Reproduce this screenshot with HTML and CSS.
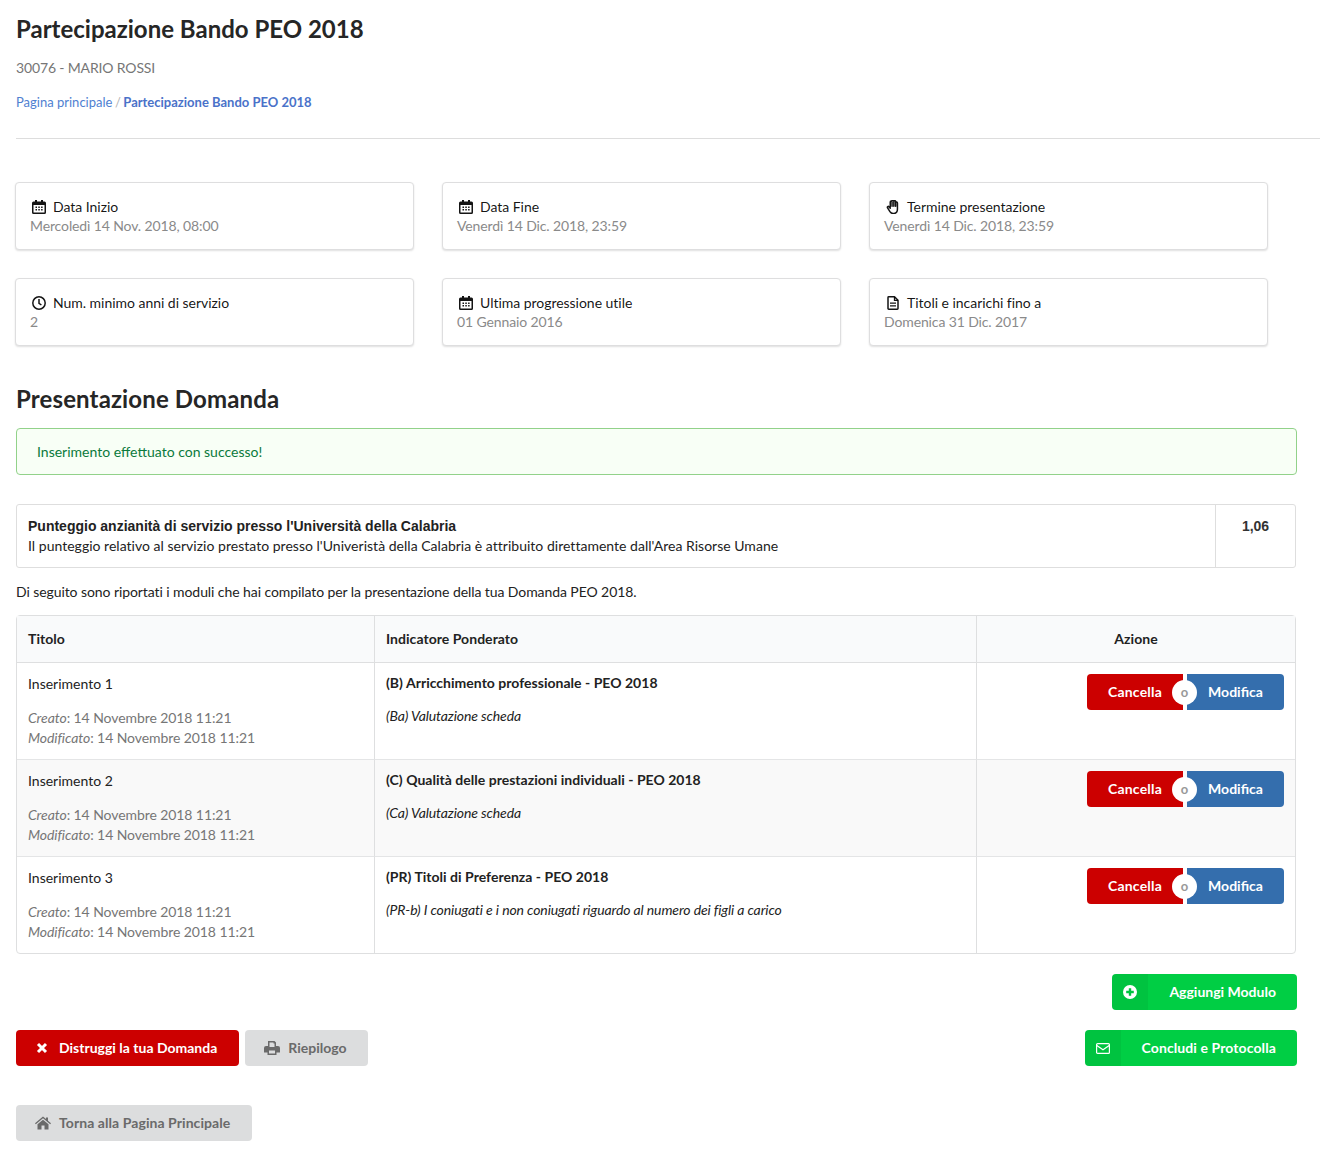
FILE: index.html
```html
<!DOCTYPE html>
<html>
<head>
    <title>Partecipazione Bando PEO 2018</title>
    <link rel="stylesheet" href="styles.css">
</head>
<body>

<svg class="icon-defs" width="0" height="0">
    <symbol id="i-calendar" viewBox="0 0 14 14"><path fill="currentColor" fill-rule="evenodd" d="M3 0h2v1.500h4V0h2v1.500h1.500A1.500 1.500 0 0 1 14 3v9.500a1.500 1.500 0 0 1-1.500 1.500h-11A1.500 1.500 0 0 1 0 12.500V3a1.500 1.500 0 0 1 1.500-1.500H3zM1.500 5v7.200c0 .2.100.3.300.3h10.400c.2 0 .3-.1.300-.3V5zM3.500 6.500h1.500V8H3.500zm2.800 0h1.500V8H6.300zm2.800 0h1.500V8H9.100zM3.500 9h1.500v1.500H3.500zm2.800 0h1.500v1.500H6.300zm2.800 0h1.500v1.500H9.100z"/></symbol>
    <symbol id="i-clock" viewBox="0 0 14 14"><circle cx="7" cy="7" r="6.200" fill="none" stroke="currentColor" stroke-width="1.500"/><path fill="none" stroke="currentColor" stroke-width="1.500" d="M7 3v4.300l2.400 1.700"/></symbol>
    <symbol id="i-hand" viewBox="0.500 0.800 12.500 14"><path fill="none" stroke="currentColor" stroke-width="1.500" stroke-linejoin="round" stroke-linecap="round" d="M4 8V2.800a.9.9 0 0 1 1.800 0V7m0-5.100a.9.9 0 0 1 1.800 0V7m0-4.600a.9.9 0 0 1 1.800 0V7m0-3.300a.9.9 0 0 1 1.800 0v6.100c0 2.500-1.400 4.500-3.900 4.500H6.800c-1.500 0-2.300-.6-3.100-1.800L1.300 8.600c-.6-1 .7-1.900 1.500-1L4 9"/></symbol>
    <symbol id="i-file" viewBox="0 0 12 14"><path fill="none" stroke="currentColor" stroke-width="1.500" stroke-linejoin="round" d="M1 1.500c0-.4.300-.7.700-.7h5.800L11 4.300v8.200c0 .4-.3.700-.7.700H1.700c-.4 0-.7-.3-.7-.7z"/><path fill="none" stroke="currentColor" stroke-width="1.300" d="M7.500 1v3.300H11M3 7.200h6M3 9.800h6"/></symbol>
    <symbol id="i-times" viewBox="0 0 12 12"><path fill="none" stroke="currentColor" stroke-width="3" d="M2 2l8 8M10 2l-8 8"/></symbol>
    <symbol id="i-print" viewBox="0 0 16 14"><path fill="currentColor" fill-rule="evenodd" d="M4 0h6.500L12 1.500V5h2a2 2 0 0 1 2 2v4.500h-3.500V14h-9v-2.500H0V7a2 2 0 0 1 2-2h2zm1.500 1.500V6h5V2.500h-1v-1zM5 9.500v3h6v-3z"/></symbol>
    <symbol id="i-home" viewBox="0 0 16 13"><path fill="currentColor" d="M8 0l3 2.500V1h2v3.200L16 6.700l-.8 1L8 1.800.8 7.700 0 6.700zM2.500 7.800L8 3.300l5.500 4.500V13H9.500V9h-3v4h-4z"/></symbol>
    <symbol id="i-plus" viewBox="0 0 14 14"><path fill="currentColor" fill-rule="evenodd" d="M7 0a7 7 0 1 1 0 14A7 7 0 0 1 7 0zM5.800 3.200v2.600H3.200v2.400h2.600v2.600h2.400V8.200h2.600V5.800H8.200V3.200z"/></symbol>
    <symbol id="i-mail" viewBox="0 0 14 11"><rect x=".6" y=".6" width="12.800" height="9.800" rx="1" fill="none" stroke="currentColor" stroke-width="1.200"/><path fill="none" stroke="currentColor" stroke-width="1.200" d="M.8 2.600L7 6.800l6.200-4.200"/></symbol>
</svg>

<header class="page-head">
    <h1>Partecipazione Bando PEO 2018</h1>
    <p class="user-line">30076 - MARIO ROSSI</p>
    <div class="breadcrumb">
        <a href="#">Pagina principale</a>
        <span class="divider">/</span>
        <a href="#" class="current">Partecipazione Bando PEO 2018</a>
    </div>
</header>

<section class="info-cards">
    <div class="card">
        <div class="card-title"><svg class="card-icon"><use href="#i-calendar"/></svg>Data Inizio</div>
        <div class="card-meta">Mercoledì 14 Nov. 2018, 08:00</div>
    </div>
    <div class="card">
        <div class="card-title"><svg class="card-icon"><use href="#i-calendar"/></svg>Data Fine</div>
        <div class="card-meta">Venerdì 14 Dic. 2018, 23:59</div>
    </div>
    <div class="card">
        <div class="card-title"><svg class="card-icon"><use href="#i-hand"/></svg>Termine presentazione</div>
        <div class="card-meta">Venerdì 14 Dic. 2018, 23:59</div>
    </div>
    <div class="card">
        <div class="card-title"><svg class="card-icon"><use href="#i-clock"/></svg>Num. minimo anni di servizio</div>
        <div class="card-meta">2</div>
    </div>
    <div class="card">
        <div class="card-title"><svg class="card-icon"><use href="#i-calendar"/></svg>Ultima progressione utile</div>
        <div class="card-meta">01 Gennaio 2016</div>
    </div>
    <div class="card">
        <div class="card-title"><svg class="card-icon"><use href="#i-file"/></svg>Titoli e incarichi fino a</div>
        <div class="card-meta">Domenica 31 Dic. 2017</div>
    </div>
</section>

<h2>Presentazione Domanda</h2>

<div class="alert-success">Inserimento effettuato con successo!</div>

<div class="score-box">
    <div class="score-text">
        <strong>Punteggio anzianità di servizio presso l'Università della Calabria</strong>
        <div class="score-note">Il punteggio relativo al servizio prestato presso l'Univeristà della Calabria è attribuito direttamente dall'Area Risorse Umane</div>
    </div>
    <div class="score-value">1,06</div>
</div>

<p class="intro">Di seguito sono riportati i moduli che hai compilato per la presentazione della tua Domanda PEO 2018.</p>

<table class="modules">
    <thead>
        <tr>
            <th class="col-title">Titolo</th>
            <th class="col-ind">Indicatore Ponderato</th>
            <th class="col-action">Azione</th>
        </tr>
    </thead>
    <tbody>
        <tr>
            <td>
                <div class="row-name">Inserimento 1</div>
                <div class="dates"><em>Creato</em>: 14 Novembre 2018 11:21<br><em>Modificato</em>: 14 Novembre 2018 11:21</div>
            </td>
            <td>
                <div class="ind-name">(B) Arricchimento professionale - PEO 2018</div>
                <div class="ind-sub">(Ba) Valutazione scheda</div>
            </td>
            <td class="action-cell">
                <div class="btn-pair">
                    <a href="#" class="btn btn-red">Cancella</a><span class="or">o</span><a href="#" class="btn btn-blue">Modifica</a>
                </div>
            </td>
        </tr>
        <tr class="striped">
            <td>
                <div class="row-name">Inserimento 2</div>
                <div class="dates"><em>Creato</em>: 14 Novembre 2018 11:21<br><em>Modificato</em>: 14 Novembre 2018 11:21</div>
            </td>
            <td>
                <div class="ind-name">(C) Qualità delle prestazioni individuali - PEO 2018</div>
                <div class="ind-sub">(Ca) Valutazione scheda</div>
            </td>
            <td class="action-cell">
                <div class="btn-pair">
                    <a href="#" class="btn btn-red">Cancella</a><span class="or">o</span><a href="#" class="btn btn-blue">Modifica</a>
                </div>
            </td>
        </tr>
        <tr>
            <td>
                <div class="row-name">Inserimento 3</div>
                <div class="dates"><em>Creato</em>: 14 Novembre 2018 11:21<br><em>Modificato</em>: 14 Novembre 2018 11:21</div>
            </td>
            <td>
                <div class="ind-name">(PR) Titoli di Preferenza - PEO 2018</div>
                <div class="ind-sub">(PR-b) I coniugati e i non coniugati riguardo al numero dei figli a carico</div>
            </td>
            <td class="action-cell">
                <div class="btn-pair">
                    <a href="#" class="btn btn-red">Cancella</a><span class="or">o</span><a href="#" class="btn btn-blue">Modifica</a>
                </div>
            </td>
        </tr>
    </tbody>
</table>

<div class="add-row">
    <a href="#" class="btn btn-green btn-labeled add-btn"><span class="btn-label"><svg class="btn-icon"><use href="#i-plus"/></svg></span>Aggiungi Modulo</a>
</div>

<div class="actions-row">
    <div class="actions-left">
        <a href="#" class="btn btn-red btn-icon-text destroy-btn"><svg class="btn-icon small"><use href="#i-times"/></svg>Distruggi la tua Domanda</a>
        <a href="#" class="btn btn-grey btn-icon-text"><svg class="btn-icon wide"><use href="#i-print"/></svg>Riepilogo</a>
    </div>
    <a href="#" class="btn btn-green btn-labeled end-btn"><span class="btn-label"><svg class="btn-icon mail"><use href="#i-mail"/></svg></span>Concludi e Protocolla</a>
</div>

<div class="back-row">
    <a href="#" class="btn btn-grey btn-icon-text back-btn"><svg class="btn-icon wide"><use href="#i-home"/></svg>Torna alla Pagina Principale</a>
</div>

</body>
</html>
```

FILE: styles.css
```css
* {
    box-sizing: border-box;
}
body {
    font-family: Lato, "Helvetica Neue", Arial, sans-serif;
    font-size: 14px;
    line-height: 20px;
    color: rgba(0, 0, 0, 0.87);
    margin: 0;
    padding: 0 0 17px 16px;
    background: #fff;
}
a {
    text-decoration: none;
}
.icon-defs {
    position: absolute;
}
h1 {
    font-size: 24px;
    line-height: 30px;
    font-weight: 700;
    color: #262626;
    margin: 0;
    padding-top: 14px;
}
.user-line {
    margin: 14px 0 0;
    color: #767676;
    font-size: 14px;
    letter-spacing: -0.15px;
}
.breadcrumb {
    display: flex;
    gap: 2.5px;
    margin-top: 14px;
    font-size: 13px;
    color: #b3b3b3;
}
.breadcrumb a {
    color: #4f7fd1;
}
.breadcrumb .current {
    font-weight: 700;
    color: #4a72c9;
}
.page-head {
    border-bottom: 1px solid #ddd;
    padding-bottom: 26px;
}
.info-cards {
    display: grid;
    grid-template-columns: repeat(3, 399px);
    column-gap: 28px;
    row-gap: 28px;
    margin: 43px 0 0 -1px;
}
.card {
    height: 68px;
    background: #fff;
    border: 1px solid #dededf;
    border-radius: 4px;
    box-shadow: 0 1px 2px rgba(0, 0, 0, 0.13);
    padding: 14px 14px;
}
.card-title {
    display: flex;
    align-items: center;
    color: rgba(0, 0, 0, 0.92);
    line-height: 20px;
    letter-spacing: -0.03px;
}
.card-icon {
    width: 14px;
    height: 14px;
    margin: 0 7px 0 2px;
    flex: none;
}
.card-meta {
    color: #8a8a8a;
    line-height: 18px;
    letter-spacing: -0.12px;
}
h2 {
    font-size: 24px;
    line-height: 30px;
    font-weight: 700;
    color: #262626;
    letter-spacing: 0.13px;
    margin: 38px 0 0;
}
.alert-success {
    width: 1281px;
    height: 47px;
    margin-top: 14px;
    padding: 13px 20px;
    border: 1px solid #92d28a;
    border-radius: 4px;
    background: #f8fff6;
    color: #0a7a3c;
}
.score-box {
    display: flex;
    width: 1280px;
    height: 64px;
    margin-top: 29px;
    border: 1px solid #dedede;
    border-radius: 3px;
}
.score-text {
    flex: 1;
    padding: 11px 11px;
    color: #222;
}
.score-note {
    letter-spacing: 0.02px;
}
.score-text strong,
.score-value {
    font-family: "Liberation Sans", Arial, sans-serif;
    font-weight: 700;
}
.score-value {
    width: 80px;
    border-left: 1px solid #dedede;
    padding-top: 11px;
    text-align: center;
    color: #333;
}
.intro {
    margin: 14px 0 13px;
    color: #222;
    letter-spacing: -0.08px;
}
.modules {
    width: 1280px;
    border: 1px solid #dedfe0;
    border-collapse: separate;
    border-spacing: 0;
    border-radius: 4px;
    table-layout: fixed;
}
.modules th {
    height: 47px;
    background: #f9fafb;
    border-bottom: 1px solid #dedfe0;
    padding: 0 11px;
    text-align: left;
    font-weight: 700;
    color: #222;
    letter-spacing: 0.04px;
}
.modules th + th,
.modules td + td {
    border-left: 1px solid #dedfe0;
}
.col-title {
    width: 357px;
}
.col-ind {
    width: 602px;
}
.modules .col-action {
    text-align: center;
}
.modules td {
    height: 97px;
    padding: 11px 11px 0;
    vertical-align: top;
    border-top: 1px solid #e4e5e6;
    color: #222;
}
.modules tbody tr:first-child td {
    height: 96px;
    border-top: 0;
}
.striped td {
    background: #f9f9f9;
}
.modules .dates {
    margin-top: 14px;
    color: #767676;
    letter-spacing: -0.08px;
}
.ind-name {
    font-weight: 700;
    margin-top: -1px;
    letter-spacing: 0.02px;
}
.ind-sub {
    margin-top: 13px;
    font-style: italic;
    letter-spacing: -0.11px;
}
.action-cell {
    text-align: right;
}
.btn {
    display: inline-block;
    height: 36px;
    line-height: 36px;
    border-radius: 4px;
    font-weight: 700;
    color: #fff;
    text-align: center;
}
.btn-red {
    background: #cc0000;
}
.btn-blue {
    background: #346ead;
}
.btn-green {
    background: #00ce44;
}
.btn-grey {
    background: #dcddde;
    color: #6a6a6a;
}
.btn-pair {
    display: flex;
    justify-content: flex-end;
    position: relative;
}
.btn-pair .btn-red {
    width: 96px;
    margin-right: 4px;
    border-radius: 4px 0 0 4px;
    letter-spacing: 0.2px;
}
.btn-pair .btn-blue {
    width: 97px;
    border-radius: 0 4px 4px 0;
}
.or {
    position: absolute;
    right: 87px;
    top: 6px;
    width: 25px;
    height: 25px;
    line-height: 25px;
    border-radius: 50%;
    background: #fff;
    text-align: center;
    color: #999;
    font-weight: 700;
    font-size: 13px;
}
.add-row {
    width: 1281px;
    margin-top: 20px;
    display: flex;
    justify-content: flex-end;
}
.btn-labeled {
    display: flex;
    align-items: center;
    justify-content: space-between;
    padding-right: 21px;
}
.btn-label {
    width: 36px;
    height: 36px;
    flex: none;
    display: flex;
    align-items: center;
    justify-content: center;
    background: rgba(0, 0, 0, 0.05);
    border-radius: 4px 0 0 4px;
}
.add-btn {
    width: 185px;
}
.end-btn {
    width: 212px;
    letter-spacing: 0.1px;
}
.btn-icon {
    width: 14px;
    height: 14px;
    flex: none;
}
.btn-icon.small {
    width: 12px;
    height: 12px;
    margin-right: 11px;
}
.btn-icon.wide {
    width: 16px;
    margin-right: 8px;
}
.btn-icon.mail {
    width: 14px;
    height: 11px;
}
.actions-row {
    width: 1281px;
    margin-top: 20px;
    display: flex;
    justify-content: space-between;
}
.actions-left {
    display: flex;
    gap: 6px;
}
.btn-icon-text {
    display: inline-flex;
    align-items: center;
    padding: 0 22px 0 19px;
}
.destroy-btn {
    padding: 0 22px 0 20px;
}
.back-btn {
    letter-spacing: 0.07px;
}
.back-row {
    margin-top: 39px;
}
```
